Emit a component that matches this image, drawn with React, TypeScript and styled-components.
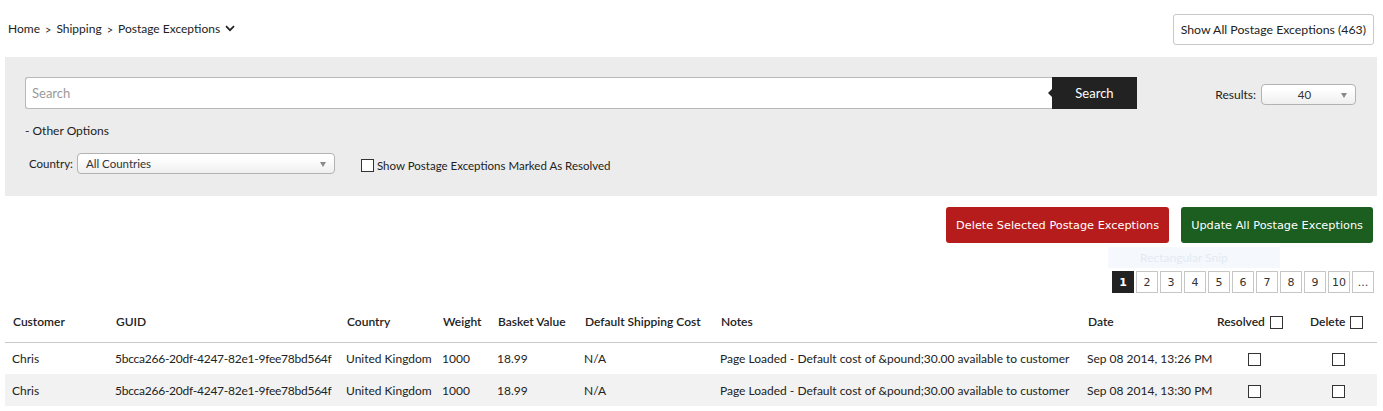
import React from 'react';
import styled, { createGlobalStyle } from 'styled-components';

const GlobalStyle = createGlobalStyle`
  body {
    margin: 0;
    background: #ffffff;
    font-family: Lato, "Open Sans", sans-serif;
    color: #222222;
  }
  * {
    box-sizing: border-box;
  }
`;

const Page = styled.div`
  position: relative;
  width: 1383px;
  padding: 0 6px 0 5px;
`;

const TopBar = styled.div`
  height: 57px;
  display: flex;
  align-items: center;
  justify-content: space-between;
  padding: 0 3px 0 3px;
`;

const Crumbs = styled.div`
  display: flex;
  align-items: center;
  gap: 5px;
  font-size: 12px;
`;

const Sep = styled.span`
  font-size: 11px;
  color: #333;
  margin-top: 2px;
`;

const OutlineButton = styled.button`
  height: 31px;
  padding: 0 7px;
  font-family: Lato, sans-serif;
  font-size: 12.3px;
  color: #222;
  background: #fff;
  border: 1px solid #c8c8c8;
  border-radius: 3px;
  margin-top: 1px;
`;

const Panel = styled.div`
  background: #ececec;
  height: 139px;
  padding: 20px 21px 0 20px;
`;

const SearchRow = styled.div`
  display: flex;
  align-items: center;
`;

const SearchBox = styled.div`
  display: flex;
  width: 1112px;
  height: 32px;
`;

const SearchInput = styled.div`
  flex: 1;
  background: #fff;
  border: 1px solid #b8b8b8;
  border-right: none;
  border-radius: 3px 0 0 3px;
  display: flex;
  align-items: center;
  padding-left: 6px;
  font-size: 13px;
  color: #9a9a9a;
`;

const SearchButton = styled.button`
  position: relative;
  width: 85px;
  background: #222222;
  color: #fff;
  border: none;
  font-family: Lato, sans-serif;
  font-size: 13px;
  &::before {
    content: '';
    position: absolute;
    left: -4px;
    top: 12px;
    border-top: 4px solid transparent;
    border-bottom: 4px solid transparent;
    border-right: 4px solid #222;
  }
`;

const ResultsGroup = styled.div`
  margin-left: auto;
  display: flex;
  align-items: center;
  gap: 5px;
  font-size: 12px;
  margin-top: 2px;
`;

const SelectBox = styled.div<{ $width: number; $center?: boolean }>`
  position: relative;
  width: ${(p) => p.$width}px;
  height: 21px;
  border: 1px solid #b3b3b3;
  border-radius: 4px;
  background: linear-gradient(#ffffff 20%, #efefef 100%);
  font-size: 11.5px;
  color: #333;
  display: flex;
  align-items: center;
  justify-content: ${(p) => (p.$center ? 'center' : 'flex-start')};
  padding: ${(p) => (p.$center ? '0 8px 0 0' : '0 0 0 8px')};
  &::after {
    content: '';
    position: absolute;
    right: 8px;
    top: 8px;
    border-left: 3.5px solid transparent;
    border-right: 3.5px solid transparent;
    border-top: 5px solid #8a8a8a;
  }
`;

const OtherOptions = styled.div`
  font-size: 12px;
  margin-top: 14px;
`;

const FilterRow = styled.div`
  display: flex;
  align-items: center;
  margin-top: 15px;
  padding-left: 4px;
  font-size: 11.5px;
`;

const FieldLabel = styled.span`
  margin-right: 4px;
`;

const CheckLabel = styled.label`
  display: flex;
  align-items: center;
  margin-left: 26px;
  margin-top: 3px;
  font-size: 11.5px;
`;

const Box = styled.span<{ $size?: number; $gap?: number }>`
  display: inline-block;
  width: ${(p) => p.$size || 13}px;
  height: ${(p) => p.$size || 13}px;
  border: 1px solid #333;
  background: #fff;
  margin-right: 3px;
  margin-left: ${(p) => p.$gap || 0}px;
  vertical-align: middle;
`;

const Actions = styled.div`
  display: flex;
  justify-content: flex-end;
  gap: 12px;
  margin-top: 11px;
  padding-right: 4px;
`;

const ActionButton = styled.button<{ $tone: 'red' | 'green' }>`
  height: 36px;
  padding: 0 10px;
  border: none;
  border-radius: 3px;
  color: #fff;
  font-family: "DejaVu Sans", Verdana, sans-serif;
  font-size: 11.3px;
  background: ${(p) => (p.$tone === 'red' ? '#b71c1c' : '#1b5e20')};
`;

const Snip = styled.div`
  position: absolute;
  left: 1108px;
  top: 247px;
  width: 172px;
  height: 21px;
  background: #f5f9fe;
  color: #e3e9f2;
  font-size: 12px;
  display: flex;
  align-items: center;
  padding-left: 32px;
`;

const Pager = styled.div`
  display: flex;
  justify-content: flex-end;
  gap: 2px;
  margin-top: 28px;
  padding-right: 3px;
`;

const PageBox = styled.span<{ $active?: boolean }>`
  width: 22px;
  height: 22px;
  display: flex;
  align-items: center;
  justify-content: center;
  border: 1px solid ${(p) => (p.$active ? '#222' : '#c6c6c6')};
  background: ${(p) => (p.$active ? '#222' : '#fff')};
  color: ${(p) => (p.$active ? '#fff' : '#333')};
  font-family: "DejaVu Sans", Verdana, sans-serif;
  font-size: 11px;
  font-weight: ${(p) => (p.$active ? 'bold' : 'normal')};
`;

const Table = styled.table`
  width: 1372px;
  border-collapse: collapse;
  table-layout: fixed;
  margin-top: 8px;
  font-size: 12px;
`;

const Th = styled.th`
  text-align: left;
  font-weight: 600;
  height: 41px;
  padding: 0 0 0 8px;
  border-bottom: 1px solid #c9c9c9;
  white-space: nowrap;
`;

const Row = styled.tr<{ $alt?: boolean }>`
  background: ${(p) => (p.$alt ? '#f2f2f2' : '#fff')};
`;

const Td = styled.td<{ $center?: boolean; $tight?: boolean }>`
  height: 32px;
  padding: 0 0 0 ${(p) => (p.$center ? 0 : 7)}px;
  text-align: ${(p) => (p.$center ? 'center' : 'left')};
  white-space: nowrap;
  letter-spacing: ${(p) => (p.$tight ? '-0.25px' : 'normal')};
`;

const widths = [103, 231, 96, 55, 87, 136, 367, 129, 93, 75];

const rows = [
  { date: 'Sep 08 2014, 13:26 PM' },
  { date: 'Sep 08 2014, 13:30 PM' },
];

const App = () => {
  return (
    <Page>
      <GlobalStyle />
      <TopBar>
        <Crumbs>
          <span>Home</span>
          <Sep>&gt;</Sep>
          <span>Shipping</span>
          <Sep>&gt;</Sep>
          <span>Postage Exceptions</span>
          <svg width="10" height="7" viewBox="0 0 10 7">
            <path d="M1 1.2 L5 5.2 L9 1.2" fill="none" stroke="#222" strokeWidth="1.7" />
          </svg>
        </Crumbs>
        <OutlineButton>Show All Postage Exceptions (463)</OutlineButton>
      </TopBar>

      <Panel>
        <SearchRow>
          <SearchBox>
            <SearchInput>Search</SearchInput>
            <SearchButton>Search</SearchButton>
          </SearchBox>
          <ResultsGroup>
            <span>Results:</span>
            <SelectBox $width={95} $center>
              40
            </SelectBox>
          </ResultsGroup>
        </SearchRow>
        <OtherOptions>- Other Options</OtherOptions>
        <FilterRow>
          <FieldLabel>Country:</FieldLabel>
          <SelectBox $width={258}>All Countries</SelectBox>
          <CheckLabel>
            <Box />
            Show Postage Exceptions Marked As Resolved
          </CheckLabel>
        </FilterRow>
      </Panel>

      <Actions>
        <ActionButton $tone="red">Delete Selected Postage Exceptions</ActionButton>
        <ActionButton $tone="green">Update All Postage Exceptions</ActionButton>
      </Actions>

      <Snip>Rectangular Snip</Snip>

      <Pager>
        {['1', '2', '3', '4', '5', '6', '7', '8', '9', '10', '...'].map((n) => (
          <PageBox key={n} $active={n === '1'}>
            {n}
          </PageBox>
        ))}
      </Pager>

      <Table>
        <colgroup>
          {widths.map((w, i) => (
            <col key={i} style={{ width: w }} />
          ))}
        </colgroup>
        <thead>
          <tr>
            <Th>Customer</Th>
            <Th>GUID</Th>
            <Th>Country</Th>
            <Th>Weight</Th>
            <Th>Basket Value</Th>
            <Th>Default Shipping Cost</Th>
            <Th>Notes</Th>
            <Th>Date</Th>
            <Th>
              Resolved<Box $gap={5} />
            </Th>
            <Th>
              Delete<Box $gap={5} />
            </Th>
          </tr>
        </thead>
        <tbody>
          {rows.map((r, i) => (
            <Row key={r.date} $alt={i % 2 === 1}>
              <Td>Chris</Td>
              <Td $tight>5bcca266-20df-4247-82e1-9fee78bd564f</Td>
              <Td>United Kingdom</Td>
              <Td>1000</Td>
              <Td>18.99</Td>
              <Td>N/A</Td>
              <Td>Page Loaded - Default cost of &amp;pound;30.00 available to customer</Td>
              <Td>{r.date}</Td>
              <Td $center>
                <Box />
              </Td>
              <Td $center>
                <Box />
              </Td>
            </Row>
          ))}
        </tbody>
      </Table>
    </Page>
  );
};

export default App;
